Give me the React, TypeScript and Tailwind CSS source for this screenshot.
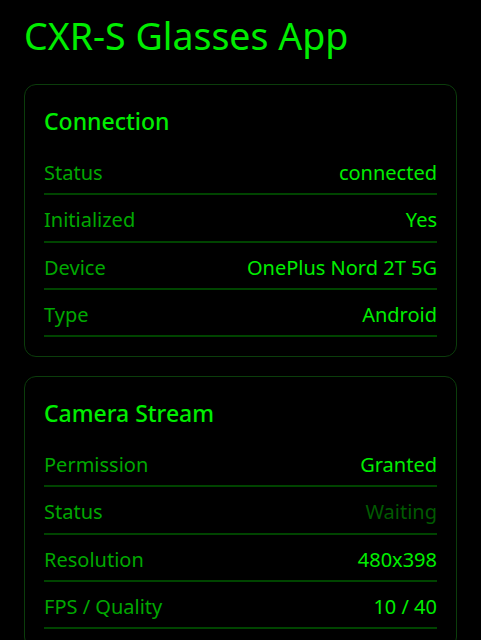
const connection = [
  { label: "Status", value: "connected" },
  { label: "Initialized", value: "Yes" },
  { label: "Device", value: "OnePlus Nord 2T 5G" },
  { label: "Type", value: "Android" },
];

const camera = [
  { label: "Permission", value: "Granted" },
  { label: "Status", value: "Waiting", dim: true },
  { label: "Resolution", value: "480x398" },
  { label: "FPS / Quality", value: "10 / 40" },
];

type Row = { label: string; value: string; dim?: boolean };

function Card({ title, rows }: { title: string; rows: Row[] }) {
  return (
    <section className="rounded-xl border border-[#0b3d0b] px-[19px] pt-5 pb-[19px]">
      <h2 className="mb-[11px] text-[23px] leading-8 font-medium text-[#00ee00]">{title}</h2>
      <div>
        {rows.map((r) => (
          <div
            key={r.label}
            className="flex items-center justify-between border-b-2 border-[#004400] pt-[11px] pb-[7px] text-[20px] leading-[27.3px]"
          >
            <span className="text-[#00a800]">{r.label}</span>
            <span className={r.dim ? "text-[#005a00]" : "text-[#00ee00]"}>{r.value}</span>
          </div>
        ))}
      </div>
    </section>
  );
}

export default function App() {
  return (
    <main
      className="min-h-screen bg-black px-6 pt-[12px] pb-10"
      style={{ fontFamily: "'Noto Sans', Roboto, sans-serif" }}
    >
      <h1 className="mb-6 text-[37.5px] leading-[48px] text-[#00ee00]">CXR-S Glasses App</h1>
      <div className="flex flex-col gap-[19px]">
        <Card title="Connection" rows={connection} />
        <Card title="Camera Stream" rows={camera} />
      </div>
    </main>
  );
}
